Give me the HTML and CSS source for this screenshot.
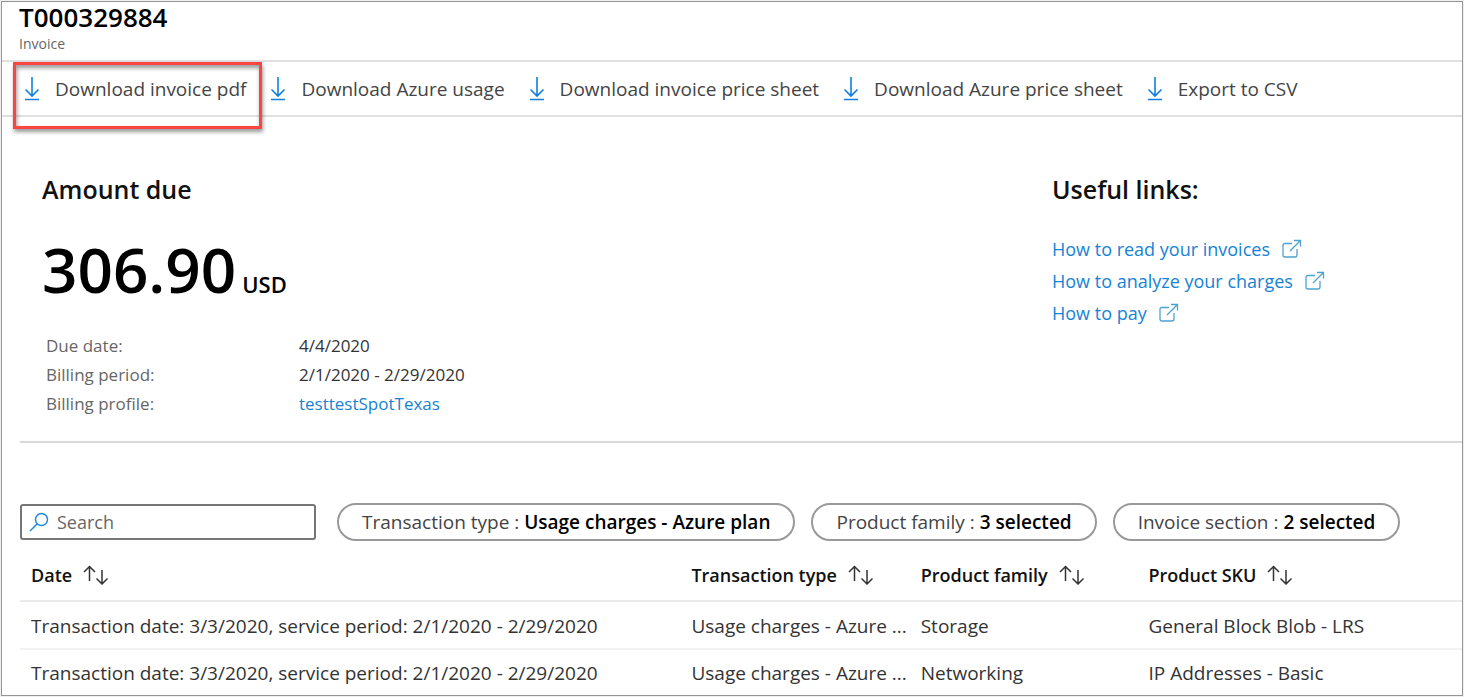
FILE: index.html
```html
<!DOCTYPE html>
<html lang="en">
<head>
<meta charset="utf-8">
<title>T000329884 - Invoice</title>
<link rel="stylesheet" href="styles.css">
</head>
<body>
<svg class="defs" aria-hidden="true">
  <symbol id="download" viewBox="0 0 16 26"><path d="M8 1v19M1.500 13.500 8 20l6.500-6.500M1 23.500h14"/></symbol>
  <symbol id="external" viewBox="0 0 20 20"><path d="M10 4.500H3Q1 4.500 1 6.500V16Q1 18 3 18H13Q15 18 15 16V10M8 12 18.500 1.500M12 1.500H18.500V7.500"/></symbol>
  <symbol id="sort" viewBox="0 0 26 20"><path d="M6.500 16V1.500M1 7l5.500-5.500L12 7M19 5v14M13.500 13.500 19 19l5.500-5.500"/></symbol>
  <symbol id="search" viewBox="0 0 20 20"><circle cx="12.500" cy="7.500" r="6"/><path d="M8.300 11.700 1 19"/></symbol>
</svg>
<div class="frame">
  <header class="header">
    <h1 class="title">T000329884</h1>
    <p class="subtitle">Invoice</p>
  </header>
  <nav class="toolbar" aria-label="Invoice actions">
    <button class="command highlighted" type="button"><svg class="icon-download"><use href="#download"/></svg>Download invoice pdf</button>
    <button class="command" type="button"><svg class="icon-download"><use href="#download"/></svg>Download Azure usage</button>
    <button class="command" type="button"><svg class="icon-download"><use href="#download"/></svg>Download invoice price sheet</button>
    <button class="command" type="button"><svg class="icon-download"><use href="#download"/></svg>Download Azure price sheet</button>
    <button class="command" type="button"><svg class="icon-download"><use href="#download"/></svg>Export to CSV</button>
  </nav>
  <main class="content">
    <div class="summary">
      <section class="due">
        <h2 class="heading">Amount due</h2>
        <p class="amount">306.90<span class="currency">USD</span></p>
        <dl class="details">
          <dt>Due date:</dt><dd>4/4/2020</dd>
          <dt>Billing period:</dt><dd>2/1/2020 - 2/29/2020</dd>
          <dt>Billing profile:</dt><dd><a class="link" href="#profile">testtestSpotTexas</a></dd>
        </dl>
      </section>
      <section class="links">
        <h2 class="heading">Useful links:</h2>
        <ul class="link-list">
          <li><a class="link" href="#read">How to read your invoices<svg class="icon-external"><use href="#external"/></svg></a></li>
          <li><a class="link" href="#analyze">How to analyze your charges<svg class="icon-external"><use href="#external"/></svg></a></li>
          <li><a class="link" href="#pay">How to pay<svg class="icon-external"><use href="#external"/></svg></a></li>
        </ul>
      </section>
    </div>
    <div class="filters">
      <label class="search"><svg class="icon-search"><use href="#search"/></svg><input class="search-input" type="search" placeholder="Search" aria-label="Search"></label>
      <button class="pill" type="button">Transaction type : <b>Usage charges - Azure plan</b></button>
      <button class="pill" type="button">Product family : <b>3 selected</b></button>
      <button class="pill" type="button">Invoice section : <b>2 selected</b></button>
    </div>
    <table class="transactions">
      <colgroup><col class="col-date"><col class="col-type"><col class="col-family"><col></colgroup>
      <thead>
        <tr>
          <th scope="col"><button class="sort" type="button">Date<svg class="icon-sort"><use href="#sort"/></svg></button></th>
          <th scope="col"><button class="sort" type="button">Transaction type<svg class="icon-sort"><use href="#sort"/></svg></button></th>
          <th scope="col"><button class="sort" type="button">Product family<svg class="icon-sort"><use href="#sort"/></svg></button></th>
          <th scope="col"><button class="sort" type="button">Product SKU<svg class="icon-sort"><use href="#sort"/></svg></button></th>
        </tr>
      </thead>
      <tbody>
        <tr><td>Transaction date: 3/3/2020, service period: 2/1/2020 - 2/29/2020</td><td>Usage charges - Azure ...</td><td>Storage</td><td>General Block Blob - LRS</td></tr>
        <tr><td>Transaction date: 3/3/2020, service period: 2/1/2020 - 2/29/2020</td><td>Usage charges - Azure ...</td><td>Networking</td><td>IP Addresses - Basic</td></tr>
      </tbody>
    </table>
  </main>
</div>
</body>
</html>
```
FILE: styles.css
```css
* { box-sizing: border-box; }

body {
  margin: 0;
  padding: 1px;
  background: #f0f0f0;
  color: #333;
  font: 18px/24px "Open Sans", "Noto Sans", sans-serif;
}

h1, h2, p, dl, dd, ul { margin: 0; padding: 0; }
ul { list-style: none; }
button, input { font: inherit; color: inherit; }
button { padding: 0; border: 0; background: none; white-space: nowrap; }
svg { flex: none; fill: none; stroke: currentColor; }

.defs { position: absolute; width: 0; height: 0; }

.frame {
  min-height: calc(100vh - 2px);
  border: 1px solid #959595;
  background: #fff;
}

.header {
  height: 60px;
  padding: 0 17px;
  border-bottom: 2px solid #e0e0e0;
}
.title { color: #000; font-size: 26px; font-weight: 600; line-height: 31px; }
.subtitle { color: #666; font-size: 14px; line-height: 21px; }

.toolbar {
  display: flex;
  gap: 24px;
  height: 55px;
  padding: 0 22px;
  border-bottom: 2px solid #e0e0e0;
  font-size: 19px;
}
.command { position: relative; display: flex; align-items: center; gap: 15px; color: #444; }
.icon-download { width: 16px; height: 26px; color: #1180dc; stroke-width: 1.600; }
.highlighted::after {
  content: "";
  position: absolute;
  inset: 0 -16px -14px -11px;
  border: 3px solid #fb4540;
  box-shadow: 1px 3px 4px rgba(0, 0, 0, .4), inset 1px 3px 4px rgba(0, 0, 0, .4);
  pointer-events: none;
}

.content { padding-left: 18px; }

.summary {
  display: grid;
  grid-template-columns: 1fr 410px;
  padding: 56px 0 23px 22px;
  border-bottom: 2px solid #dcd6d6;
}
.heading { color: #111; font-size: 25px; font-weight: 600; line-height: 32px; }
.amount { padding: 24px 0 7px; color: #000; font-size: 62px; font-weight: 600; line-height: 80px; }
.currency { margin-left: 6px; font-size: 22px; }
.details {
  display: grid;
  grid-template-columns: 253px 1fr;
  padding-left: 4px;
  font-size: 17px;
  line-height: 29px;
}
.details dt { color: #666; }
.link { color: #1682d6; text-decoration: none; }
.link-list { padding-top: 28px; line-height: 32px; }
.link-list .link { display: flex; align-items: center; gap: 12px; }
.icon-external { width: 20px; height: 20px; color: #4da3cf; stroke-width: 1.300; }

.filters { display: flex; align-items: center; gap: 16px; padding-top: 60px; }
.search {
  display: flex;
  align-items: center;
  gap: 8px;
  width: 296px;
  height: 36px;
  margin-right: 5px;
  padding: 0 7px;
  border: 2px solid #767676;
  border-radius: 3px;
}
.icon-search { width: 20px; height: 20px; color: #2088dd; stroke-width: 1.500; }
.search-input { flex: 1; min-width: 0; padding: 0; border: 0; outline: 0; background: none; }
.search-input::placeholder { color: #666; opacity: 1; }
.pill { height: 38px; padding: 0 23px; border: 2px solid #999; border-radius: 19px; color: #444; font-size: 19px; }
.pill b { color: #000; font-weight: 600; }

.transactions { width: 100%; border-collapse: collapse; table-layout: fixed; }
.col-date { width: 45.8%; }
.col-type { width: 15.9%; }
.col-family { width: 15.8%; }
.transactions th, .transactions td { height: 48px; padding: 2px 0 0 11px; text-align: left; white-space: nowrap; }
.transactions th { height: 60px; padding-top: 8px; }
.transactions td { font-size: 19px; }
.transactions tr:last-child td { height: 45px; }
.transactions tr + tr td { border-top: 2px solid #f3f3f3; }
.transactions thead tr { border-bottom: 2px solid #eaeaea; }
.sort { display: flex; align-items: center; gap: 11px; color: #111; font-weight: 600; }
.icon-sort { width: 26px; height: 20px; color: #333; stroke-width: 1.500; }
```
